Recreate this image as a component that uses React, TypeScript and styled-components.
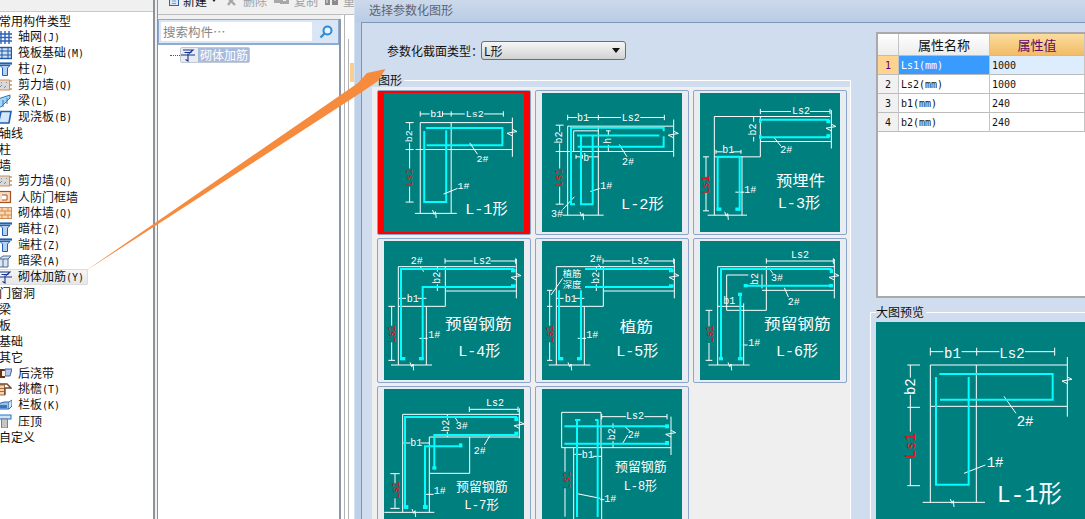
import React from "react";
import styled, { createGlobalStyle } from "styled-components";

const Global = createGlobalStyle`
  html, body { margin: 0; padding: 0; overflow: hidden; background: #fff; }
  #root { width: 1085px; height: 519px; overflow: hidden; }
`;

const CJK = `"Noto Sans CJK SC", "Liberation Sans", sans-serif`;
const MONO = `"DejaVu Sans Mono", "Liberation Mono", "Noto Sans CJK SC", monospace`;

const Page = styled.div`
  position: relative;
  display: flex;
  width: 1085px;
  height: 519px;
  overflow: hidden;
  font-family: ${CJK};
  font-size: 12px;
  color: #111;
  background: #fff;
`;

/* ---------- left: component type list ---------- */
const LeftPanel = styled.div`
  width: 153px;
  flex: none;
  display: flex;
  flex-direction: column;
`;
const LeftTop = styled.div`
  height: 11px;
  flex: none;
  background: #f0f0f0;
  border-bottom: 1px solid #c8c8c8;
`;
const TypeList = styled.div`
  display: flex;
  flex-direction: column;
  padding-top: 1px;
`;
const GroupRow = styled.div`
  height: 16px;
  line-height: 16px;
  margin-left: -1px;
  white-space: nowrap;
`;
const ItemRow = styled.div<{ $active?: boolean }>`
  height: 16px;
  line-height: 16px;
  display: flex;
  align-items: center;
  gap: 6px;
  margin-left: -2px;
  padding-right: 4px;
  white-space: nowrap;
  box-sizing: border-box;
  width: ${(p) => (p.$active ? "90px" : "auto")};
  background: ${(p) => (p.$active ? "linear-gradient(#f6f6f6, #e6e6e6)" : "transparent")};
  border-radius: ${(p) => (p.$active ? "2px" : "0")};
  box-shadow: ${(p) => (p.$active ? "inset 0 0 0 1px #dcdcdc" : "none")};
`;
const Hot = styled.span`
  font-family: ${MONO};
  font-size: 10px;
`;
const IconSvg = styled.svg`
  width: 14px;
  height: 14px;
  flex: none;
`;

const Divider = styled.div`
  width: 5px;
  flex: none;
  box-sizing: border-box;
  background: #f0f0f0;
  border-left: 2px solid #8e929c;
  border-right: 1px solid #8e929c;
`;

/* ---------- middle: toolbar, search, tree ---------- */
const MiddleCol = styled.div`
  width: 196px;
  flex: none;
  display: flex;
  flex-direction: column;
  background: #f0f0f0;
`;
const Toolbar = styled.div`
  height: 15px;
  flex: none;
  box-sizing: border-box;
  display: flex;
  align-items: flex-end;
  gap: 7px;
  padding: 0 0 6px 11px;
  overflow: hidden;
  border-bottom: 1px solid #bdbdbd;
`;
const ToolBtn = styled.div<{ $off?: boolean }>`
  display: flex;
  align-items: center;
  gap: 4px;
  height: 16px;
  flex: none;
  color: ${(p) => (p.$off ? "#a0a0a0" : "#111")};
  white-space: nowrap;
`;
const MiddleBody = styled.div`
  flex: 1;
  display: flex;
  min-height: 0;
`;
const TreePanel = styled.div`
  width: 183px;
  flex: none;
  margin-top: 4px;
  display: flex;
  flex-direction: column;
  background: #fff;
  border-right: 2px solid #8e96a6;
  box-sizing: border-box;
`;
const SearchBar = styled.div`
  height: 26px;
  flex: none;
  box-sizing: border-box;
  display: flex;
  align-items: stretch;
  background: #d9e6f6;
  border: 1px solid #8fabd2;
  border-bottom-width: 2px;
  padding: 1px 0 1px 1px;
`;
const SearchInput = styled.div`
  flex: 1;
  box-sizing: border-box;
  background: #fff;
  border-radius: 2px;
  border: 1px solid #dfe6f2;
  color: #868686;
  font-size: 12.5px;
  line-height: 20px;
  padding-left: 2px;
`;
const SearchBtn = styled.div`
  width: 25px;
  flex: none;
  display: flex;
  align-items: center;
  justify-content: center;
`;
const TreeRow = styled.div`
  display: flex;
  align-items: center;
  height: 16px;
  margin-top: 2px;
  padding-left: 12px;
`;
const TreeDots = styled.span`
  width: 10px;
  border-top: 1px dotted #555;
  flex: none;
`;
const TreeNode = styled.div`
  display: flex;
  align-items: center;
  height: 16px;
  box-sizing: border-box;
  border: 1px solid #c2c9d4;
  border-radius: 2px;
  background: #e9ebf0;
`;
const TreeLabel = styled.span`
  background: #a9bbdb;
  color: #fff;
  padding: 0 1px 0 2px;
  line-height: 14px;
  margin-left: 3px;
  white-space: nowrap;
`;
const SideStrip = styled.div`
  flex: 1;
  display: flex;
  background: #fff;
  padding-left: 3px;
`;
const StripOuter = styled.div`
  flex: 1;
  border-left: 1px solid #b4b4b4;
  padding-left: 3px;
  display: flex;
`;
const StripInner = styled.div`
  flex: 1;
  margin-top: 24px;
  border-left: 1px solid #b4b4b4;
  padding-left: 1px;
`;
const StripCell = styled.div`
  height: 19px;
  margin-top: 24px;
  background: #f7cf92;
`;

/* ---------- dialog ---------- */
const Dialog = styled.div`
  flex: 1;
  min-width: 0;
  display: flex;
  flex-direction: column;
  background: #bfd1e8;
  border-left: 1px solid #d6e1f0;
`;
const TitleBar = styled.div`
  height: 22px;
  flex: none;
  box-sizing: border-box;
  padding: 2px 0 0 14px;
  line-height: 16px;
  color: #5e6470;
  background: linear-gradient(#ccd9ea, #b9cce5);
`;
const DialogBody = styled.div`
  flex: 1;
  min-height: 0;
  display: flex;
  margin-left: 6px;
  background: #d0ddee;
  border-left: 1px solid #7d96b9;
  border-top: 1px solid #7d96b9;
`;
const ShapeCol = styled.div`
  width: 489px;
  flex: none;
  display: flex;
  flex-direction: column;
  padding-top: 18px;
`;
const TypeRow = styled.div`
  display: flex;
  align-items: center;
  height: 19px;
  padding-left: 25px;
`;
const TypeLabel = styled.span`
  width: 94px;
  flex: none;
  white-space: nowrap;
`;
const SelectBox = styled.div`
  width: 145px;
  height: 19px;
  box-sizing: border-box;
  display: flex;
  align-items: center;
  justify-content: space-between;
  padding: 0 5px 0 2px;
  border: 1px solid #6e6e6e;
  border-radius: 3px;
  background: linear-gradient(#f6f6f6, #e4e4e4 50%, #d2d2d2);
`;
const SelectCaret = styled.span`
  width: 0;
  height: 0;
  border-left: 4px solid transparent;
  border-right: 4px solid transparent;
  border-top: 5px solid #111;
`;
const ShapeGroup = styled.div`
  position: relative;
  flex: 1;
  min-height: 0;
  margin: 20px 0 0 10px;
  display: flex;
  flex-direction: column;
  border-top: 1px solid #fff;
  border-right: 1px solid #fff;
  padding-top: 6px;
`;
const Legend = styled.span<{ $left: number; $top: number }>`
  position: absolute;
  left: ${(p) => p.$left}px;
  top: ${(p) => p.$top}px;
  line-height: 14px;
  padding-right: 2px;
  background: #d0ddee;
  white-space: nowrap;
`;
const ShapeGrid = styled.div`
  flex: 1;
  display: grid;
  grid-template-columns: repeat(3, 154px);
  grid-auto-rows: 145px;
  gap: 3px 4px;
  align-content: start;
  padding: 3px 0 0 5px;
  background: #efefef;
`;
const ShapeCard = styled.div<{ $selected?: boolean }>`
  box-sizing: border-box;
  padding: 2px 6px;
  border: 1px solid #8ca5ca;
  border-radius: 2px;
  background: ${(p) => (p.$selected ? "#ff0000" : "#e9ecf1")};
`;
const DrawSvg = styled.svg`
  display: block;
  width: 140px;
  height: 139px;
  background: #007f7f;
  overflow: hidden;
`;
const Wire = styled.path`
  fill: none;
  stroke: #fff;
  stroke-width: 3;
`;
const Bar = styled.path<{ $w?: number }>`
  fill: none;
  stroke: #00ffff;
  stroke-width: ${(p) => p.$w ?? 6};
`;
const Nub = styled.rect`
  fill: #00ffff;
`;
const Label = styled.text<{ $red?: boolean; $size?: number }>`
  fill: ${(p) => (p.$red ? "#ff0000" : "#fff")};
  font-family: "Liberation Mono", "Noto Sans CJK SC", monospace;
  font-size: ${(p) => p.$size ?? 30}px;
`;

const RightCol = styled.div`
  flex: 1;
  min-width: 0;
  display: flex;
  flex-direction: column;
  padding-top: 9px;
  margin-left: 19px;
`;
const PropTable = styled.div`
  margin-left: 6px;
  height: 266px;
  flex: none;
  box-sizing: border-box;
  border-left: 2px solid #a9a9a9;
  border-top: 2px solid #a9a9a9;
  border-bottom: 2px solid #a9a9a9;
  background: #fff;
  display: grid;
  grid-template-columns: 21px 91px 1fr;
  grid-auto-rows: 19px;
  grid-template-rows: 22px;
  align-content: start;
`;
const HeadCell = styled.div<{ $hot?: boolean }>`
  display: flex;
  align-items: center;
  justify-content: center;
  font-size: 13px;
  box-sizing: border-box;
  border-right: 1px solid #c4c4c4;
  border-bottom: 1px solid #bcbcbc;
  color: ${(p) => (p.$hot ? "#5c0a68" : "#111")};
  background: ${(p) => (p.$hot ? "linear-gradient(#fbdc9e, #f2bc66)" : "linear-gradient(#ffffff, #ececec)")};
`;
const IndexCell = styled.div<{ $hot?: boolean }>`
  display: flex;
  align-items: center;
  justify-content: center;
  font-family: ${MONO};
  font-size: 10px;
  box-sizing: border-box;
  border-right: 1px solid #c4c4c4;
  border-bottom: 1px solid #bcbcbc;
  color: ${(p) => (p.$hot ? "#5c0a68" : "#111")};
  background: ${(p) => (p.$hot ? "#fdd48f" : "#f1f1f1")};
`;
const ValueCell = styled.div<{ $bg?: string; $light?: boolean }>`
  display: flex;
  align-items: center;
  padding-left: 2px;
  font-family: ${MONO};
  font-size: 10px;
  box-sizing: border-box;
  border-right: 1px solid #c4c4c4;
  border-bottom: 1px solid #bcbcbc;
  color: ${(p) => (p.$light ? "#fff" : "#111")};
  background: ${(p) => p.$bg ?? "#fff"};
`;
const PreviewGroup = styled.div`
  position: relative;
  flex: 1;
  min-height: 0;
  margin-top: 14px;
  box-sizing: border-box;
  border-top: 1px solid #fff;
  border-left: 1px solid #fff;
  padding: 9px 0 0 5px;
`;
const PreviewSvg = styled.svg`
  display: block;
  width: 209px;
  height: 197px;
  background: #007f7f;
`;
const ArrowOverlay = styled.svg`
  position: absolute;
  left: 0;
  top: 0;
  width: 1085px;
  height: 519px;
  pointer-events: none;
`;

/* ---------- icons ---------- */
const icons: Record<string, React.ReactNode> = {
  grid: <path d="M0 4H14M0 7.5H14M0 11H14M3 1V14M7 1V14M11 1V14" stroke="#2c62b8" strokeWidth="1.4" fill="none" />,
  raft: (
    <>
      <rect x="0.5" y="1.5" width="13" height="11" fill="#cfe0f4" stroke="#1f5aa8" strokeWidth="1.4" />
      <path d="M0 5H14M0 9H14M4 2V12M10 2V12" stroke="#1f5aa8" fill="none" />
    </>
  ),
  col: (
    <>
      <path d="M0 1.5H14" stroke="#1f5fb4" strokeWidth="2.2" />
      <path d="M2 3.5H12L9.5 6V13.5H4.5V6Z" fill="#b7d2ee" stroke="#1f5fb4" />
    </>
  ),
  wall: (
    <>
      <rect x="0.5" y="2" width="11" height="10" fill="#d9d9d9" stroke="#c98f5f" />
      <path d="M2 9L4 7M6 10L8 8M3 5L4 4.5M8 5L9 4" stroke="#888" />
      <path d="M13 2V12" stroke="#e08a3c" strokeDasharray="2 2" strokeWidth="1.4" />
    </>
  ),
  beam: (
    <>
      <path d="M0 5L12 1V4L3 13H1Z" fill="#a8d4f2" stroke="#2a78c4" />
      <path d="M5 13V6M9 10V4" stroke="#2a78c4" />
    </>
  ),
  slab: <path d="M3 1.5H13L11 13H0.5Z" fill="#d4e6f8" stroke="#1f5fb4" strokeWidth="1.6" />,
  door: (
    <>
      <rect x="0.5" y="1.5" width="12" height="11" fill="#f6dcc2" stroke="#a8531f" strokeWidth="1.2" />
      <path d="M4 5H9V10H4" fill="#fff" stroke="#a8531f" />
    </>
  ),
  brick: (
    <>
      <rect x="0.5" y="1.5" width="13" height="11" fill="#f8d8b4" stroke="#d58a4a" />
      <path d="M0 5H14M0 9H14M4 2V5M10 2V5M7 5V9M4 9V13M10 9V13" stroke="#d58a4a" />
    </>
  ),
  dbeam: (
    <>
      <path d="M1 5L5 2H13L10 5V13H1Z" fill="#dbe6f2" stroke="#4a6a94" />
      <path d="M1 5H10M5 5V13" stroke="#4a6a94" />
    </>
  ),
  rebar: <path d="M2 2H12L8 5.5M0 7H14M7 5.5V13L4.5 11.5M3.5 4.5L10.5 4.5" stroke="#12348c" strokeWidth="1.1" fill="none" />,
  pour: (
    <>
      <rect x="0" y="3" width="7" height="9" fill="#6b3212" />
      <path d="M7 3H14L12 10H7Z" fill="#b6c9ea" stroke="#3b63b0" />
      <rect x="4" y="5" width="3" height="5" fill="#f3f3f3" />
    </>
  ),
  eave: (
    <>
      <rect x="0.5" y="3" width="6" height="10" fill="#f6d3ae" stroke="#b26a33" />
      <path d="M0 6.5H6M0 9.5H6" stroke="#b26a33" />
      <path d="M0 2H9L13 6H7V13" fill="none" stroke="#6e4a2f" strokeWidth="1.4" />
    </>
  ),
  rail: (
    <>
      <path d="M0 6L6 4H11V11H0Z" fill="#9dc0e6" stroke="#2a68b4" />
      <path d="M11 4L14 2V8L11 11" fill="#d5e6f6" stroke="#2a68b4" />
      <rect x="1" y="7" width="8" height="3" fill="#3a74bc" />
    </>
  ),
  coping: (
    <>
      <rect x="0" y="1" width="13" height="4" fill="#cfe2f6" stroke="#1f72d0" />
      <rect x="3.5" y="5" width="6" height="9" fill="#c6c6c6" stroke="#808080" />
    </>
  ),
};
const Icon = ({ name }: { name: string }) => <IconSvg viewBox="0 0 14 14">{icons[name]}</IconSvg>;

type Row = { t: string; k?: string; i?: string; on?: boolean };
const rows: Row[] = [
  { t: "常用构件类型" },
  { t: "轴网", k: "(J)", i: "grid" },
  { t: "筏板基础", k: "(M)", i: "raft" },
  { t: "柱", k: "(Z)", i: "col" },
  { t: "剪力墙", k: "(Q)", i: "wall" },
  { t: "梁", k: "(L)", i: "beam" },
  { t: "现浇板", k: "(B)", i: "slab" },
  { t: "轴线" },
  { t: "柱" },
  { t: "墙" },
  { t: "剪力墙", k: "(Q)", i: "wall" },
  { t: "人防门框墙", i: "door" },
  { t: "砌体墙", k: "(Q)", i: "brick" },
  { t: "暗柱", k: "(Z)", i: "col" },
  { t: "端柱", k: "(Z)", i: "col" },
  { t: "暗梁", k: "(A)", i: "dbeam" },
  { t: "砌体加筋", k: "(Y)", i: "rebar", on: true },
  { t: "门窗洞" },
  { t: "梁" },
  { t: "板" },
  { t: "基础" },
  { t: "其它" },
  { t: "后浇带", i: "pour" },
  { t: "挑檐", k: "(T)", i: "eave" },
  { t: "栏板", k: "(K)", i: "rail" },
  { t: "压顶", i: "coping" },
  { t: "自定义" },
];

/* ---------- drawing helpers (coordinates are in 1/3 pixel units) ---------- */
const Rot = ({ x, y, t, red, size }: { x: number; y: number; t: string; red?: boolean; size?: number }) => (
  <Label $red={red} $size={size} x={x} y={y} textAnchor="middle" dominantBaseline="central" transform={`rotate(-90 ${x} ${y})`}>
    {t}
  </Label>
);
const T = ({ x, y, t, w, size }: { x: number; y: number; t: string; w?: number; size?: number }) => (
  <Label $size={size} x={x} y={y} textLength={w} lengthAdjust={w ? "spacingAndGlyphs" : undefined}>
    {t}
  </Label>
);
const BreakDown = ({ x, y }: { x: number; y: number }) => <Wire d={`M${x - 5} ${y - 10}L${x} ${y + 3}L${x + 4} ${y - 5}L${x + 6} ${y + 14}`} />;
const BreakRight = ({ x, y }: { x: number; y: number }) => <Wire d={`M${x - 16} ${y + 2}L${x + 14} ${y - 3}L${x} ${y - 10}M${x - 16} ${y + 2}L${x} ${y + 10}`} />;
const Ticks = ({ x, y, len = 8 }: { x: number[]; y: number; len?: number }) => (
  <Wire d={x.map((v) => `M${v} ${y - len}V${y + len}`).join("")} />
);
const HTicks = ({ x, y, len = 12 }: { x: number; y: number[]; len?: number }) => (
  <Wire d={y.map((v) => `M${x - len} ${v}H${x + len}`).join("")} />
);

const Card1 = () => (
  <DrawSvg viewBox="69 279 421 416">
    <Wire d="M178 341H206M243 341H312M370 341H428M178 367H455M178 367V640M271 367V640M164 448H455M162 640H288M455 352V470M146 367V390M146 428V505M146 560V606" />
    <Ticks x={[178, 245, 271, 428]} y={341} />
    <HTicks x={146} y={[367, 448, 606]} />
    <BreakRight x={455} y={397} />
    <BreakDown x={220} y={640} />
    <Bar d="M195 383H425V435H197M190 392V606H256V390" />
    <Wire d="M327 428L350 462M248 582L290 565" />
    <T x={208} y={351} t="b1" />
    <T x={315} y={351} t="Ls2" />
    <Rot x={146} y={408} t="b2" />
    <Rot x={146} y={532} t="Ls1" red />
    <T x={347} y={486} t="2#" />
    <T x={290} y={568} t="1#" />
    <T x={313} y={642} t="L-1形" w={128} size={44} />
  </DrawSvg>
);
const Card2 = () => (
  <DrawSvg viewBox="543 279 420 416">
    <Wire d="M620 352H648M680 352H780M838 352H910M620 378H938M620 378V645M712 378V645M605 645H728M605 454H938M938 358V470M638 392H712M638 392V454M596 375V395M596 430V505M596 560V612M742 392V406M742 434V454M645 470H664M684 470H712M775 433L798 470M688 574L716 565M605 628L640 590" />
    <Ticks x={[620, 712, 910]} y={352} />
    <Ticks x={[645, 664]} y={470} len={6} />
    <HTicks x={596} y={[375, 454, 612]} />
    <HTicks x={742} y={[392, 454]} len={7} />
    <BreakRight x={938} y={403} />
    <BreakDown x={662} y={645} />
    <Bar d="M908 393V383H630V612H642M908 408V440H650M648 406H895M660 404V612H695V404" />
    <T x={648} y={362} t="b1" />
    <T x={782} y={362} t="Ls2" />
    <Rot x={596} y={412} t="b2" />
    <Rot x={596} y={532} t="Ls1" red />
    <Rot x={742} y={422} t="h" />
    <T x={667} y={483} t="b" />
    <T x={783} y={495} t="2#" />
    <T x={718} y={567} t="1#" />
    <T x={570} y={650} t="3#" />
    <T x={780} y={627} t="L-2形" w={128} size={44} />
  </DrawSvg>
);
const Card3 = () => (
  <DrawSvg viewBox="27 279 420 416">
    <Wire d="M208 334H300M357 334H417M70 349H417M70 349V470M70 470H208M208 349V470M208 424H420M421 330V445M70 470V645M153 470V645M50 645H168M75 455H95M125 455H150M45 470V530M45 578V632M188 349V365M188 410V424M133 576H160M250 413L270 438" />
    <Ticks x={[208, 417]} y={334} />
    <Ticks x={[75, 150]} y={455} len={6} />
    <HTicks x={45} y={[470, 632]} len={9} />
    <BreakRight x={421} y={382} />
    <BreakDown x={106} y={645} />
    <Bar d="M208 359H415M208 411H415M80 632V470H146V632" />
    <Nub x={204} y={356} width={8} height={12} />
    <Nub x={204} y={404} width={8} height={12} />
    <Nub x={406} y={359} width={12} height={10} />
    <Nub x={406} y={402} width={12} height={10} />
    <Nub x={77} y={622} width={14} height={10} />
    <Nub x={133} y={622} width={14} height={10} />
    <T x={94} y={458} t="b1" />
    <T x={303} y={342} t="Ls2" />
    <Rot x={188} y={388} t="b2" />
    <Rot x={48} y={554} t="Ls1" red />
    <T x={160} y={580} t="1#" />
    <T x={268} y={460} t="2#" />
    <T x={255} y={557} t="预埋件" w={147} size={46} />
    <T x={260} y={624} t="L-3形" w={128} size={44} />
  </DrawSvg>
);
const Card4 = () => (
  <DrawSvg viewBox="39 18 420 417">
    <Wire d="M222 78H305M358 78H434M82 95H434M82 95V390M223 95V214M82 214H223M223 168H436M436 72V190M166 214V390M60 390H183M199 95V110M199 148V168M82 190H105M140 190H166M62 214V272M62 322V376M145 310H170M148 95L158 110" />
    <Ticks x={[222, 434]} y={78} />
    <HTicks x={62} y={[214, 376]} len={10} />
    <BreakRight x={436} y={125} />
    <BreakDown x={122} y={392} />
    <Bar d="M90 375V102H430M155 375V156H430" />
    <Nub x={87} y={366} width={16} height={10} />
    <Nub x={144} y={366} width={14} height={10} />
    <Nub x={420} y={102} width={14} height={10} />
    <Nub x={420} y={148} width={14} height={10} />
    <T x={119} y={86} t="2#" />
    <T x={306} y={86} t="Ls2" />
    <T x={107} y={201} t="b1" />
    <T x={172} y={310} t="1#" />
    <Rot x={200} y={128} t="b2" />
    <Rot x={65} y={298} t="Ls1" red />
    <T x={222} y={282} t="预留钢筋" w={200} size={46} />
    <T x={262} y={364} t="L-4形" w={126} size={44} />
  </DrawSvg>
);
const Card5 = () => (
  <DrawSvg viewBox="513 18 420 417">
    <Wire d="M696 78H778M832 78H908M556 95H910M556 95V214M697 95V214M556 214H697M697 168H910M910 72V190M556 214V390M640 214V390M533 390H658M556 190H578M612 190H640M536 166V272M536 322V376M620 310H645M575 130L540 180M676 95V110M676 148V168M682 88L692 102" />
    <Ticks x={[696, 908]} y={78} />
    <HTicks x={536} y={[166, 214, 376]} len={8} />
    <BreakRight x={910} y={125} />
    <BreakDown x={596} y={392} />
    <Bar d="M642 102H905M642 156H905M564 375V166M630 375V166" />
    <Nub x={561} y={366} width={16} height={10} />
    <Nub x={618} y={366} width={14} height={10} />
    <Nub x={894} y={102} width={14} height={10} />
    <Nub x={894} y={148} width={14} height={10} />
    <T x={656} y={80} t="2#" />
    <T x={780} y={86} t="Ls2" />
    <T x={581} y={201} t="b1" />
    <T x={646} y={310} t="1#" />
    <T x={575} y={126} t="植筋" size={28} w={56} />
    <T x={575} y={158} t="深度" size={28} w={56} />
    <Rot x={678} y={128} t="b2" />
    <Rot x={540} y={298} t="Ls1" red />
    <T x={746} y={292} t="植筋" w={100} size={46} />
    <T x={736} y={364} t="L-5形" w={126} size={44} />
  </DrawSvg>
);
const Card6 = () => (
  <DrawSvg viewBox="27 18 420 417">
    <Wire d="M226 78H427M80 95H430M80 95V390M226 95V226M80 214H158M107 226H226M107 120V226M107 120H172M213 166H430M430 72V190M158 205V390M52 390H176M54 226V274M54 324V376M155 330H170M280 158L292 186M236 102L246 116M213 118V160" />
    <Ticks x={[226, 427]} y={78} />
    <HTicks x={54} y={[226, 376]} len={10} />
    <BreakRight x={430} y={125} />
    <BreakDown x={116} y={392} />
    <Bar d="M90 375V102H422M160 152H422M148 175V375" />
    <Nub x={84} y={366} width={12} height={10} />
    <Nub x={141} y={366} width={14} height={10} />
    <Nub x={141} y={173} width={12} height={10} />
    <Nub x={416} y={102} width={10} height={12} />
    <Nub x={414} y={147} width={12} height={10} />
    <Nub x={158} y={147} width={12} height={10} />
    <T x={300} y={68} t="Ls2" />
    <T x={97} y={207} t="b1" />
    <T x={240} y={138} t="3#" />
    <T x={290} y={211} t="2#" />
    <T x={172} y={334} t="1#" />
    <Rot x={192} y={132} t="b2" />
    <Rot x={58} y={298} t="Ls1" red />
    <T x={219} y={282} t="预留钢筋" w={200} size={46} />
    <T x={255} y={364} t="L-6形" w={126} size={44} />
  </DrawSvg>
);
const Card7 = () => (
  <DrawSvg viewBox="39 462 420 417">
    <Wire d="M295 523H441M95 538H445M95 538V832M445 520V610M175 606H445M175 606V832M175 715H296M296 606V715M40 832H190M229 538V555M229 590V606M252 547L260 560M358 600L340 630M97 624H118M150 624H175M72 716V745M72 790V820M160 778H188" />
    <Ticks x={[295, 441]} y={523} />
    <HTicks x={72} y={[716, 820]} len={14} />
    <BreakRight x={445} y={570} />
    <BreakDown x={128} y={832} />
    <Bar d="M102 815V546H438M162 815V634H272M190 702V600H438" />
    <Nub x={98} y={810} width={14} height={12} />
    <Nub x={156} y={810} width={14} height={12} />
    <Nub x={184} y={694} width={12} height={10} />
    <Nub x={264} y={625} width={10} height={12} />
    <Nub x={430} y={546} width={12} height={12} />
    <Nub x={430} y={590} width={12} height={12} />
    <T x={345} y={514} t="Ls2" />
    <T x={254} y={583} t="3#" />
    <T x={308} y={656} t="2#" />
    <T x={118} y={633} t="b1" />
    <T x={188} y={778} t="1#" />
    <Rot x={228} y={572} t="b2" />
    <Rot x={76} y={766} t="Ls1" red />
    <T x={255} y={767} t="预留钢筋" w={155} size={38} />
    <T x={280} y={823} t="L-7形" w={103} size={38} />
  </DrawSvg>
);
const Card8 = () => (
  <DrawSvg viewBox="513 462 420 417">
    <Wire d="M692 545H765M820 545H888M572 532H690V638H572ZM690 638H900M900 545V660M762 575L778 590M755 625L770 600M610 658H632M665 664H692M608 638V852M692 638V852M582 638V710M582 760V845M618 776L688 790M688 794H700M726 565V580M726 618V636" />
    <Ticks x={[692, 888]} y={545} />
    <BreakRight x={900} y={596} />
    <Bar d="M580 574H892M580 626H892M618 555V846M680 555V846" />
    <Nub x={612} y={552} width={16} height={6} />
    <Nub x={672} y={552} width={10} height={6} />
    <Nub x={882} y={568} width={12} height={12} />
    <Nub x={882} y={618} width={12} height={12} />
    <T x={765} y={553} t="Ls2" />
    <T x={770} y={608} t="2#" />
    <T x={632} y={668} t="b1" />
    <T x={700} y={802} t="1#" />
    <Rot x={726} y={598} t="b2" />
    <Rot x={590} y={735} t="Ls1" red />
    <T x={732} y={708} t="预留钢筋" w={155} size={38} />
    <T x={758} y={766} t="L-8形" w={100} size={38} />
  </DrawSvg>
);

const Preview = () => (
  <PreviewSvg viewBox="558 261 627 591">
    <Wire d="M721 350H760M815 350H860M860 350H928M1005 350H1094M721 390H1132M721 390V802M859 390V802M723 514H1132M1132 366V545M698 802H885M661 390V428M661 480V590M661 672V752M942 484L978 535M822 715L886 690" />
    <Ticks x={[721, 860, 1094]} y={350} len={12} />
    <HTicks x={671} y={[390, 517, 752]} len={19} />
    <BreakRight x={1132} y={436} />
    <BreakDown x={786} y={802} />
    <Bar d="M748 417H1088V494H750M738 426V749H836V426" />
    <Label $size={42} x={762} y={369}>b1</Label>
    <Label $size={42} x={928} y={369}>Ls2</Label>
    <Rot x={662} y={455} t="b2" size={42} />
    <Rot x={662} y={632} t="Ls1" red size={42} />
    <T x={980} y={572} t="2#" size={42} />
    <T x={890} y={695} t="1#" size={42} />
    <T x={920} y={802} t="L-1形" w={195} size={72} />
  </PreviewSvg>
);

const cards = [Card1, Card2, Card3, Card4, Card5, Card6, Card7, Card8];
const props = [
  ["Ls1(mm)", "1000"],
  ["Ls2(mm)", "1000"],
  ["b1(mm)", "240"],
  ["b2(mm)", "240"],
];

export default function App() {
  return (
    <Page>
      <Global />
      <LeftPanel>
        <LeftTop />
        <TypeList>
          {rows.map((r, i) =>
            r.i ? (
              <ItemRow key={i} $active={r.on}>
                <Icon name={r.i} />
                <span>
                  {r.t}
                  {r.k && <Hot>{r.k}</Hot>}
                </span>
              </ItemRow>
            ) : (
              <GroupRow key={i}>{r.t}</GroupRow>
            )
          )}
        </TypeList>
      </LeftPanel>
      <Divider />
      <MiddleCol>
        <Toolbar>
          <ToolBtn>
            <svg width="10" height="11" viewBox="0 0 10 11">
              <rect x="0.5" y="0.5" width="9" height="10" fill="#dce8f6" stroke="#3a5fa8" />
              <path d="M0 3.5H10" stroke="#3a5fa8" strokeWidth="2" />
              <path d="M3 6H7M3 8.5H7" stroke="#7f9ac8" />
            </svg>
            新建
            <svg width="6" height="4" viewBox="0 0 6 4">
              <path d="M0 0H6L3 4Z" fill="#222" />
            </svg>
          </ToolBtn>
          <ToolBtn $off>
            <svg width="15" height="11" viewBox="0 0 15 11">
              <path d="M2 1L7 6L12 1M4 10L7 6L11 10" stroke="#a8a8a8" strokeWidth="2.4" fill="none" />
            </svg>
            删除
          </ToolBtn>
          <ToolBtn $off>
            <svg width="16" height="11" viewBox="0 0 16 11">
              <rect x="0" y="3" width="9" height="5" fill="#a8a8a8" />
              <rect x="6" y="0" width="9" height="9" fill="#a8a8a8" />
              <rect x="9" y="3" width="3" height="3" fill="#eee" />
            </svg>
            复制
          </ToolBtn>
          <ToolBtn $off>
            <svg width="14" height="11" viewBox="0 0 14 11">
              <rect x="0" y="1" width="5" height="9" fill="#8c8c8c" />
              <rect x="7" y="3" width="6" height="7" fill="#8c8c8c" />
              <path d="M2 3V8M9 5H11" stroke="#eee" />
            </svg>
            重
          </ToolBtn>
        </Toolbar>
        <MiddleBody>
          <TreePanel>
            <SearchBar>
              <SearchInput>搜索构件…</SearchInput>
              <SearchBtn>
                <svg width="14" height="14" viewBox="0 0 14 14">
                  <circle cx="8.5" cy="5.5" r="4" fill="#e8f4fc" stroke="#2c8ad8" strokeWidth="2" />
                  <path d="M5.5 8.5L1.5 12.5" stroke="#3a8cc8" strokeWidth="2.4" />
                </svg>
              </SearchBtn>
            </SearchBar>
            <TreeRow>
              <TreeDots />
              <TreeNode>
                <Icon name="rebar" />
                <TreeLabel>砌体加筋</TreeLabel>
              </TreeNode>
            </TreeRow>
          </TreePanel>
          <SideStrip>
            <StripOuter>
              <StripInner>
                <StripCell />
              </StripInner>
            </StripOuter>
          </SideStrip>
        </MiddleBody>
      </MiddleCol>
      <Dialog>
        <TitleBar>选择参数化图形</TitleBar>
        <DialogBody>
          <ShapeCol>
            <TypeRow>
              <TypeLabel>参数化截面类型：</TypeLabel>
              <SelectBox>
                <span>L形</span>
                <SelectCaret />
              </SelectBox>
            </TypeRow>
            <ShapeGroup>
              <Legend $left={6} $top={-8}>图形</Legend>
              <ShapeGrid>
                {cards.map((C, i) => (
                  <ShapeCard key={i} $selected={i === 0}>
                    <C />
                  </ShapeCard>
                ))}
              </ShapeGrid>
            </ShapeGroup>
          </ShapeCol>
          <RightCol>
            <PropTable>
              <HeadCell />
              <HeadCell>属性名称</HeadCell>
              <HeadCell $hot>属性值</HeadCell>
              {props.map(([n, v], i) => (
                <React.Fragment key={n}>
                  <IndexCell $hot={i === 0}>{i + 1}</IndexCell>
                  <ValueCell $bg={i === 0 ? "#3a9bff" : undefined} $light={i === 0}>
                    {n}
                  </ValueCell>
                  <ValueCell $bg={i === 0 ? "#deedfe" : undefined}>{v}</ValueCell>
                </React.Fragment>
              ))}
            </PropTable>
            <PreviewGroup>
              <Legend $left={5} $top={-8}>大图预览</Legend>
              <Preview />
            </PreviewGroup>
          </RightCol>
        </DialogBody>
      </Dialog>
      <ArrowOverlay viewBox="0 0 1085 519">
        <polygon points="84,272 358,83 367,73 385.5,69 378,81 362,92" fill="#f68b3d" />
      </ArrowOverlay>
    </Page>
  );
}
